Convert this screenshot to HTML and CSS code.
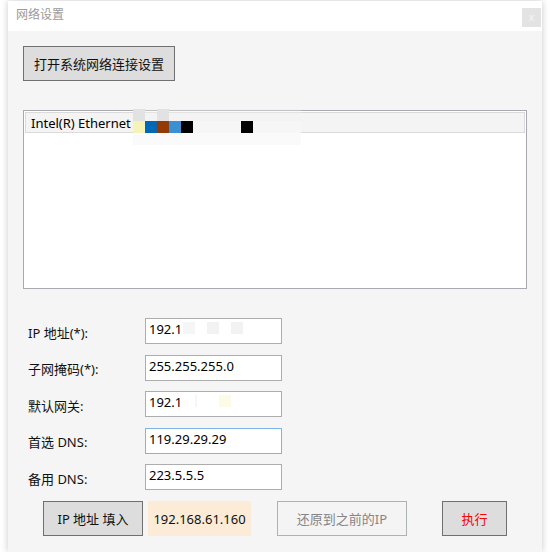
FILE: index.html
```html
<!DOCTYPE html>
<html lang="zh">
<head>
<meta charset="utf-8">
<title>网络设置</title>
<link rel="stylesheet" href="styles.css">
</head>
<body>
<div class="window">
  <div class="titlebar">
    <span class="title">网络设置</span>
    <span class="close">x</span>
  </div>
  <div class="content">
    <button class="btn open-btn">打开系统网络连接设置</button>
    <div class="listbox">
      <div class="item">
        <span class="item-text">Intel(R) Ethernet</span>
        <span class="redact">
          <i class="g1"></i><i class="g0"></i><i class="g1"></i><i class="g0"></i><i class="g0"></i><i class="g0"></i><i class="g0"></i><i class="g0"></i><i class="g0"></i><i class="g0"></i><i class="g0"></i><i class="g0"></i><i class="g0"></i><i class="g0"></i>
          <i class="cy"></i><i class="cb"></i><i class="cr"></i><i class="cl"></i><i class="ck"></i><i class="w"></i><i class="w"></i><i class="w"></i><i class="w"></i><i class="ck"></i><i class="w"></i><i class="w"></i><i class="w"></i><i class="w"></i>
          <i class="g0"></i><i class="g0"></i><i class="g0"></i><i class="g0"></i><i class="g0"></i><i class="g0"></i><i class="g0"></i><i class="g0"></i><i class="g0"></i><i class="g0"></i><i class="g0"></i><i class="g0"></i><i class="g0"></i><i class="g0"></i>
        </span>
      </div>
    </div>
    <div class="form">
      <label class="lbl">IP 地址(*):</label>
      <div class="field">192.1<span class="mask m1"></span></div>
      <label class="lbl">子网掩码(*):</label>
      <div class="field">255.255.255.0</div>
      <label class="lbl">默认网关:</label>
      <div class="field">192.1<span class="mask m2"></span></div>
      <label class="lbl">首选 DNS:</label>
      <div class="field focus">119.29.29.29</div>
      <label class="lbl">备用 DNS:</label>
      <div class="field">223.5.5.5</div>
    </div>
    <div class="actions">
      <button class="btn fill-btn">IP 地址 填入</button>
      <span class="ip-tag">192.168.61.160</span>
      <button class="btn restore-btn">还原到之前的IP</button>
      <button class="btn run-btn">执行</button>
    </div>
  </div>
</div>
</body>
</html>
```

FILE: styles.css
```css
* { box-sizing: border-box; }
html, body { margin: 0; padding: 0; background: #ffffff; }
body {
  font-family: "Noto Sans", "Noto Sans CJK SC", sans-serif;
  font-size: 13px;
  color: #111;
}
.window {
  margin: 1px 0 0 8px;
  width: 534px;
  height: 551px;
  background: #f5f5f5;
  box-shadow: 0 0 7px rgba(0,0,0,0.22);
  display: flex;
  flex-direction: column;
}
.titlebar {
  height: 30px;
  background: #ffffff;
  display: flex;
  align-items: center;
  justify-content: space-between;
  padding: 0 1px 0 8px;
}
.title {
  font-size: 12px;
  color: #9a9a9a;
  line-height: 16px;
  margin-top: -2px;
}
.close {
  width: 19px;
  height: 19px;
  background: #e3e3e3;
  color: #f6f6f6;
  font-size: 11px;
  line-height: 17px;
  text-align: center;
  align-self: flex-start;
  margin-top: 7px;
}
.content {
  flex: 1;
  padding: 15px 15px 0 15px;
  display: flex;
  flex-direction: column;
}
.btn {
  font-family: "Noto Sans", "Noto Sans CJK SC", sans-serif;
  font-size: 13px;
  background: #dddddd;
  border: 1px solid #707070;
  color: #111;
  padding: 0;
  margin: 0;
}
.open-btn {
  width: 152px;
  height: 35px;
  align-self: flex-start;
}
.listbox {
  margin-top: 29px;
  width: 504px;
  height: 179px;
  background: #ffffff;
  border: 1px solid #a9a9b0;
  padding: 1px;
}
.item {
  position: relative;
  height: 21px;
  background: #f4f4f4;
  border: 1px solid #dadada;
  display: flex;
  align-items: center;
  padding-left: 5px;
}
.item-text {
  font-size: 13px;
  line-height: 18px;
  color: #000;
}
.redact {
  position: absolute;
  left: 107px;
  top: -4px;
  display: grid;
  grid-template-columns: repeat(14, 12px);
  grid-template-rows: repeat(3, 12px);
}
.redact i { display: block; }
.redact .g0 { background: rgba(240,240,240,0.35); }
.redact .g1 { background: #e2e2e2; }
.redact .w { background: #f6f6f6; }
.redact .cy { background: #f6f3b8; }
.redact .cb { background: #0068b5; }
.redact .cr { background: #943a00; }
.redact .cl { background: #3b8fd4; }
.redact .ck { background: #000000; }
.form {
  margin-top: 29px;
  display: grid;
  grid-template-columns: 117px 137px;
  grid-auto-rows: 26px;
  row-gap: 10.5px;
  padding-left: 5px;
}
.lbl {
  align-self: center;
  font-size: 13px;
  color: #111;
  padding-top: 2px;
}
.field {
  background: #ffffff;
  border: 1px solid #adadad;
  font-size: 13px;
  line-height: 18px;
  padding: 1px 0 0 3px;
  color: #000;
  display: flex;
  align-items: flex-start;
}
.field.focus { border-color: #7eb4ea; }
.mask {
  display: inline-block;
  height: 12px;
  margin-top: 2px;
  margin-left: 1px;
}
.m1 {
  width: 60px;
  background: linear-gradient(90deg, #f4f6f8 0 12px, #fff 12px 24px, #f2f2f2 24px 36px, #fff 36px 48px, #f2f2f2 48px 60px);
}
.m2 {
  width: 48px;
  background: linear-gradient(90deg, #fff 0 12px, #f6f6f6 12px 14px, #fff 14px 36px, #fcfce6 36px 48px);
}
.actions {
  margin-top: 11px;
  padding-left: 20px;
  display: flex;
  align-items: stretch;
  height: 35px;
}
.fill-btn { width: 100px; }
.ip-tag {
  margin-left: 5px;
  width: 103px;
  background: #fbebd7;
  color: #111;
  display: flex;
  align-items: center;
  justify-content: center;
  font-size: 13px;
}
.restore-btn {
  margin-left: 26px;
  width: 130px;
  background: #f4f4f4;
  border-color: #adb2b5;
  color: #858585;
}
.run-btn {
  margin-left: 35px;
  width: 65px;
  color: #ff0000;
}
```
